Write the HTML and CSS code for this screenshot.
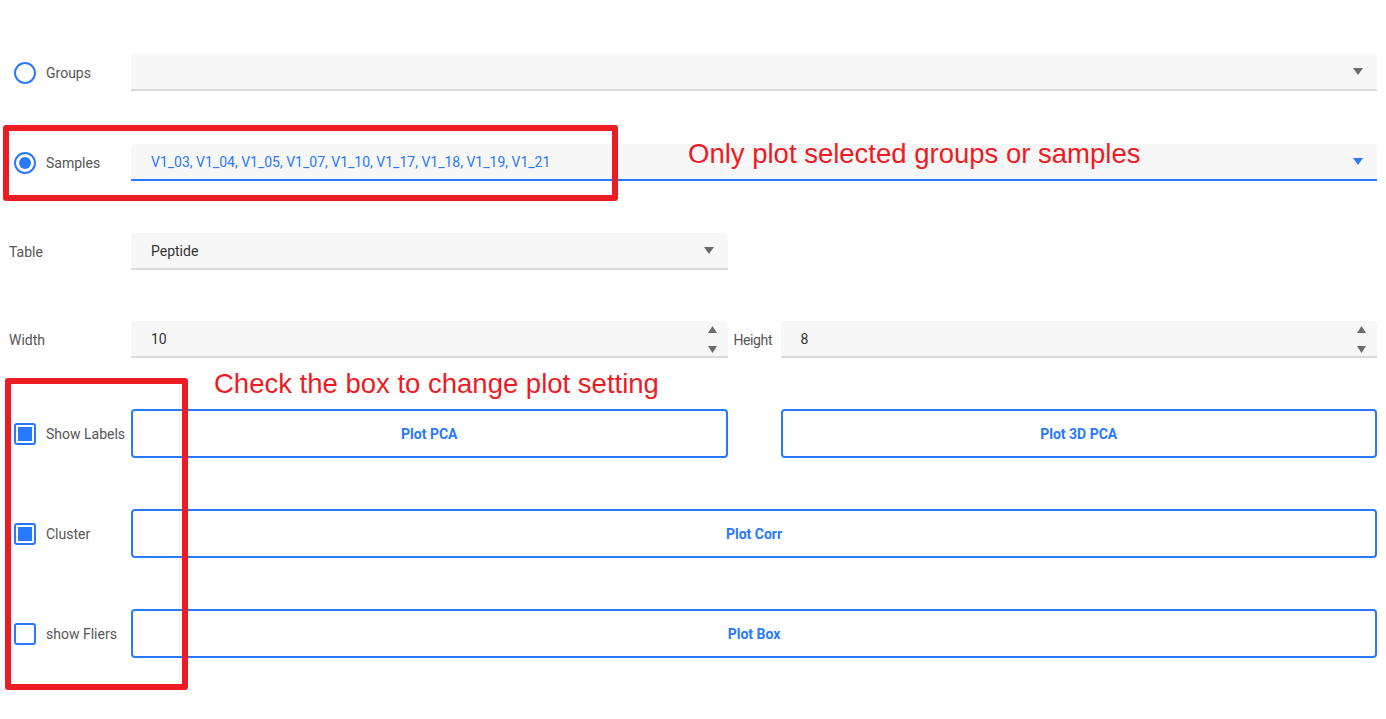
FILE: index.html
```html
<!DOCTYPE html>
<html>
<head>
<meta charset="utf-8">
<title>Plot settings</title>
<link rel="stylesheet" href="styles.css">
</head>
<body>
<div class="page">
  <div class="row r1">
    <div class="opt"><span class="radio"></span><span class="lbl">Groups</span></div>
    <div class="field wide">
      <span class="val"></span>
      <svg class="caret" width="10" height="7" viewBox="0 0 10 7"><polygon points="0,0 10,0 5,7"/></svg>
    </div>
  </div>

  <div class="row r2">
    <div class="opt"><span class="radio on"></span><span class="lbl">Samples</span></div>
    <div class="field wide active">
      <span class="val">V1_03, V1_04, V1_05, V1_07, V1_10, V1_17, V1_18, V1_19, V1_21</span>
      <svg class="caret" width="10" height="7" viewBox="0 0 10 7"><polygon points="0,0 10,0 5,7"/></svg>
    </div>
  </div>

  <div class="row r3">
    <div class="plain">Table</div>
    <div class="field">
      <span class="val">Peptide</span>
      <svg class="caret" width="10" height="7" viewBox="0 0 10 7"><polygon points="0,0 10,0 5,7"/></svg>
    </div>
  </div>

  <div class="row r4">
    <div class="plain">Width</div>
    <div class="field num">
      <span class="val">10</span>
      <span class="spin">
        <svg width="9" height="7" viewBox="0 0 9 7"><polygon points="4.5,0 9,7 0,7"/></svg>
        <svg width="9" height="7" viewBox="0 0 9 7"><polygon points="0,0 9,0 4.5,7"/></svg>
      </span>
    </div>
    <div class="plain mid">Height</div>
    <div class="field num">
      <span class="val">8</span>
      <span class="spin">
        <svg width="9" height="7" viewBox="0 0 9 7"><polygon points="4.5,0 9,7 0,7"/></svg>
        <svg width="9" height="7" viewBox="0 0 9 7"><polygon points="0,0 9,0 4.5,7"/></svg>
      </span>
    </div>
  </div>

  <div class="row r5">
    <div class="opt"><span class="check on"></span><span class="lbl">Show Labels</span></div>
    <button class="btn">Plot PCA</button>
    <div></div>
    <button class="btn">Plot 3D PCA</button>
  </div>

  <div class="row r6">
    <div class="opt"><span class="check on"></span><span class="lbl">Cluster</span></div>
    <button class="btn wide">Plot Corr</button>
  </div>

  <div class="row r7">
    <div class="opt"><span class="check"></span><span class="lbl">show Fliers</span></div>
    <button class="btn wide">Plot Box</button>
  </div>

  <div class="mark m1"></div>
  <div class="mark m2"></div>
  <div class="note n1">Only plot selected groups or samples</div>
  <div class="note n2">Check the box to change plot setting</div>
</div>
</body>
</html>
```

FILE: styles.css
```css
html, body {
  margin: 0;
  padding: 0;
  background: #ffffff;
}

.page {
  position: relative;
  width: 1386px;
  height: 719px;
  box-sizing: border-box;
  padding: 54px 9px 0 9px;
  font-family: Roboto, "Liberation Sans", Arial, sans-serif;
  font-size: 14px;
  color: #555555;
  overflow: hidden;
}

.row {
  display: grid;
  grid-template-columns: 122px 1fr 53px 1fr;
  align-items: center;
}

.r1 { margin-bottom: 53px; }
.r2 { margin-bottom: 52px; }
.r3 { margin-bottom: 51px; }
.r4 { margin-bottom: 51px; }
.r5 { margin-bottom: 51px; }
.r6 { margin-bottom: 51px; }

.opt {
  display: flex;
  align-items: center;
  gap: 10px;
  padding-left: 5px;
  white-space: nowrap;
}

.lbl {
  color: #555555;
}

.plain {
  color: #555555;
  white-space: nowrap;
}

.plain.mid {
  padding-left: 6px;
  letter-spacing: -0.4px;
}

.radio {
  width: 22px;
  height: 22px;
  box-sizing: border-box;
  border: 2px solid #2979ff;
  border-radius: 50%;
  display: flex;
  align-items: center;
  justify-content: center;
  flex: none;
}

.radio.on::after {
  content: "";
  width: 12px;
  height: 12px;
  border-radius: 50%;
  background: #2979ff;
}

.check {
  width: 22px;
  height: 22px;
  box-sizing: border-box;
  border: 2px solid #2979ff;
  border-radius: 3px;
  display: flex;
  align-items: center;
  justify-content: center;
  flex: none;
}

.check.on::after {
  content: "";
  width: 14px;
  height: 14px;
  background: #2979ff;
}

.field {
  height: 37px;
  box-sizing: border-box;
  background: #f7f7f7;
  border-bottom: 2px solid #d9d9d9;
  border-radius: 4px 4px 0 0;
  display: flex;
  align-items: center;
  padding: 0 14px 0 20px;
  color: #333333;
}

.field.wide {
  grid-column: 2 / 5;
}

.field .val {
  flex: 1;
  white-space: nowrap;
}

.caret {
  fill: #6b6b6b;
  flex: none;
}

.field.active {
  border-bottom-color: #2979ff;
}

.field.active .val {
  color: #2979ff;
}

.field.active .caret {
  fill: #2979ff;
}

.field.num {
  padding-right: 11px;
}

.spin {
  display: flex;
  flex-direction: column;
  gap: 13px;
  padding-top: 2px;
}

.spin svg {
  fill: #6b6b6b;
  display: block;
}

.btn {
  height: 49px;
  box-sizing: border-box;
  background: #ffffff;
  border: 2px solid #2979ff;
  border-radius: 4px;
  color: #2979ff;
  font-family: Roboto, "Liberation Sans", Arial, sans-serif;
  font-size: 14px;
  font-weight: 700;
  cursor: pointer;
}

.btn.wide {
  grid-column: 2 / 5;
}

.mark {
  position: absolute;
  border: 6px solid #ed1c24;
  border-radius: 3px;
  box-sizing: border-box;
}

.m1 {
  left: 3px;
  top: 125px;
  width: 615px;
  height: 76px;
}

.m2 {
  left: 5px;
  top: 378px;
  width: 183px;
  height: 312px;
}

.note {
  position: absolute;
  font-family: "Liberation Sans", Arial, sans-serif;
  font-size: 27.5px;
  line-height: 30px;
  color: #ed1c24;
  white-space: nowrap;
}

.n1 {
  left: 688px;
  top: 139px;
}

.n2 {
  left: 214px;
  top: 369px;
}
```
